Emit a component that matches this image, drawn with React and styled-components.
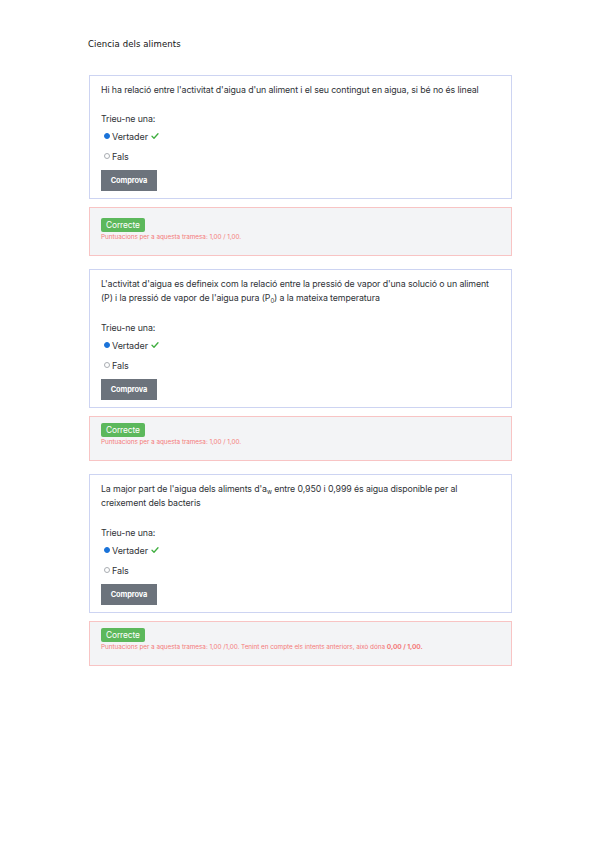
import React from "react";
import styled, { createGlobalStyle } from "styled-components";

const GlobalStyle = createGlobalStyle`
  html, body {
    margin: 0;
    padding: 0;
    background: #ffffff;
  }
  body {
    font-family: Inter, "Liberation Sans", sans-serif;
    color: #2b2f33;
  }
`;

const Page = styled.div`
  width: 599px;
  min-height: 848px;
  padding: 37px 0 0 89px;
  box-sizing: border-box;
`;

const Title = styled.div`
  font-family: "DejaVu Sans", sans-serif;
  font-size: 8.5px;
  letter-spacing: 0.1px;
  color: #111;
  margin-left: -1px;
  height: 14px;
  line-height: 14px;
  margin-bottom: 24px;
`;

const Card = styled.div`
  width: 423px;
  box-sizing: border-box;
  border: 1.5px solid #cdd4f2;
  padding: 7px 11px 7px 11px;
  display: flex;
  flex-direction: column;
`;

const Question = styled.div`
  font-size: 8.8px;
  letter-spacing: -0.1px;
  line-height: 14px;
  color: #2f3337;
  min-height: ${p => (p.lines || 1) * 14 + (p.lines - 1)}px;
  margin-bottom: 15px;

  sub {
    font-size: 6px;
    line-height: 0;
    vertical-align: -2px;
  }
`;

const Prompt = styled.div`
  font-size: 8.8px;
  letter-spacing: -0.1px;
  line-height: 14px;
  color: #2f3337;
`;

const Option = styled.div`
  display: flex;
  align-items: center;
  height: 20px;
  padding-left: 3px;
  font-size: 9px;
  letter-spacing: -0.1px;
  color: #2f3337;
`;

const Radio = styled.span`
  width: 6px;
  height: 6px;
  border-radius: 50%;
  box-sizing: border-box;
  margin-right: 2px;
  border: 1px solid ${p => (p.checked ? "#1a73d9" : "#a9adb2")};
  background: ${p => (p.checked ? "#1a73d9" : "#fff")};
  flex-shrink: 0;
`;

const Check = styled.svg`
  width: 8px;
  height: 8px;
  margin-left: 3px;
`;

const Button = styled.div`
  margin-top: 4px;
  width: 56px;
  height: 21px;
  background: #6c737c;
  color: #fff;
  font-size: 7.4px;
  font-weight: 700;
  display: flex;
  align-items: center;
  justify-content: center;
  letter-spacing: -0.1px;
`;

const Feedback = styled.div`
  width: 423px;
  box-sizing: border-box;
  margin: 8px 0 13px 0;
  border: 1.5px solid #f8c4c4;
  background: #f3f4f6;
  padding: ${p => (p.first ? 10 : 6)}px 11px 13px 11px;
  display: flex;
  flex-direction: column;
  align-items: flex-start;
`;

const Badge = styled.div`
  height: 14px;
  padding: 0 5px;
  background: #5cb85c;
  border-radius: 2px;
  color: #fff;
  font-size: 8.4px;
  line-height: 14px;
  letter-spacing: -0.1px;
  margin-bottom: 1px;
`;

const Score = styled.div`
  font-size: 6.4px;
  line-height: 9px;
  color: #f47b7b;
  letter-spacing: -0.05px;

  b {
    font-weight: 700;
    font-size: 6.6px;
  }
`;

const CheckMark = () => (
  <Check viewBox="0 0 16 16">
    <path
      d="M2 8.5 L6 12.5 L14 3.5"
      fill="none"
      stroke="#3fae3f"
      strokeWidth="2.6"
      strokeLinecap="round"
      strokeLinejoin="round"
    />
  </Check>
);

const questions = [
  {
    lines: 1,
    text: <>Hi ha relació entre l'activitat d'aigua d'un aliment i el seu contingut en aigua, si bé no és lineal</>,
    score: <>Puntuacions per a aquesta tramesa: 1,00 / 1,00.</>
  },
  {
    lines: 2,
    text: (
      <>
        L'activitat d'aigua es defineix com la relació entre la pressió de vapor d'una solució o un aliment
        <br />
        (P) i la pressió de vapor de l'aigua pura (P<sub>0</sub>) a la mateixa temperatura
      </>
    ),
    score: <>Puntuacions per a aquesta tramesa: 1,00 / 1,00.</>
  },
  {
    lines: 2,
    text: (
      <>
        La major part de l'aigua dels aliments d'a<sub>w</sub> entre 0,950 i 0,999 és aigua disponible per al
        <br />
        creixement dels bacteris
      </>
    ),
    score: (
      <>
        Puntuacions per a aquesta tramesa: 1,00 /1,00. Tenint en compte els intents anteriors, això dóna <b>0,00 / 1,00.</b>
      </>
    )
  }
];

export default function App() {
  return (
    <>
      <GlobalStyle />
      <Page>
        <Title>Ciencia dels aliments</Title>
        {questions.map((q, i) => (
          <React.Fragment key={i}>
            <Card>
              <Question lines={q.lines}>{q.text}</Question>
              <Prompt>Trieu-ne una:</Prompt>
              <Option>
                <Radio checked />
                Vertader
                <CheckMark />
              </Option>
              <Option>
                <Radio />
                Fals
              </Option>
              <Button>Comprova</Button>
            </Card>
            <Feedback first={i === 0}>
              <Badge>Correcte</Badge>
              <Score>{q.score}</Score>
            </Feedback>
          </React.Fragment>
        ))}
      </Page>
    </>
  );
}
